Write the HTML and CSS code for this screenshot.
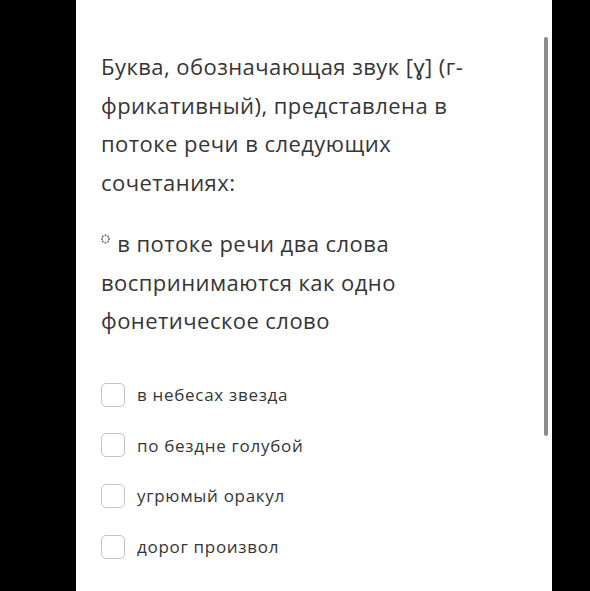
FILE: index.html
```html
<!DOCTYPE html>
<html lang="ru">
<head>
    <meta charset="UTF-8">
    <meta name="viewport" content="width=device-width, initial-scale=1.0">
    <title>Вопрос</title>
    <link rel="stylesheet" href="styles.css">
</head>
<body>
    <div class="panel">
        <p class="question">Буква, обозначающая звук [ɣ] (г-фрикативный), представлена в потоке речи в следующих сочетаниях:</p>
        <p class="hint">
            <svg class="spinner" width="9" height="10" viewBox="0 0 9 10">
                <circle cx="4.5" cy="1.2" r="1"/>
                <circle cx="7.2" cy="2.4" r="1"/>
                <circle cx="8" cy="5" r="1"/>
                <circle cx="7.2" cy="7.6" r="1"/>
                <circle cx="4.5" cy="8.8" r="1"/>
                <circle cx="1.8" cy="7.6" r="1"/>
                <circle cx="1" cy="5" r="1"/>
                <circle cx="1.8" cy="2.4" r="1"/>
            </svg>
            в потоке речи два слова воспринимаются как одно фонетическое слово
        </p>

        <div class="options">
            <label class="option"><span class="box"></span>в небесах звезда</label>
            <label class="option"><span class="box"></span>по бездне голубой</label>
            <label class="option"><span class="box"></span>угрюмый оракул</label>
            <label class="option"><span class="box"></span>дорог произвол</label>
        </div>

        <div class="scrollbar"></div>
    </div>
</body>
</html>
```

FILE: styles.css
```css
body {
    margin: 0;
    background-color: #000;
    font-family: "Open Sans", "Noto Sans", sans-serif;
    color: #363636;
}
.panel {
    position: relative;
    margin-left: 76px;
    width: 476px;
    height: 591px;
    background: #fff;
    padding: 47px 0 0 25px;
    box-sizing: border-box;
}
.question,
.hint {
    width: 400px;
    margin: 0;
    font-size: 22px;
    line-height: 38.5px;
    letter-spacing: 0.45px;
}
.hint {
    margin-top: 23px;
}
.spinner {
    fill: #6a6a6a;
    vertical-align: 8px;
    margin-right: 1px;
}
.options {
    display: flex;
    flex-direction: column;
    gap: 26.7px;
    margin-top: 43px;
}
.option {
    display: flex;
    align-items: center;
    gap: 12px;
    height: 24px;
    font-size: 17px;
    letter-spacing: 0.7px;
}
.box {
    width: 24px;
    height: 24px;
    box-sizing: border-box;
    border: 1.5px solid #c4c4c4;
    border-radius: 5px;
}
.scrollbar {
    position: absolute;
    left: 468px;
    top: 37px;
    width: 4px;
    height: 399px;
    border-radius: 2px;
    background: #8c8c8c;
}
```
